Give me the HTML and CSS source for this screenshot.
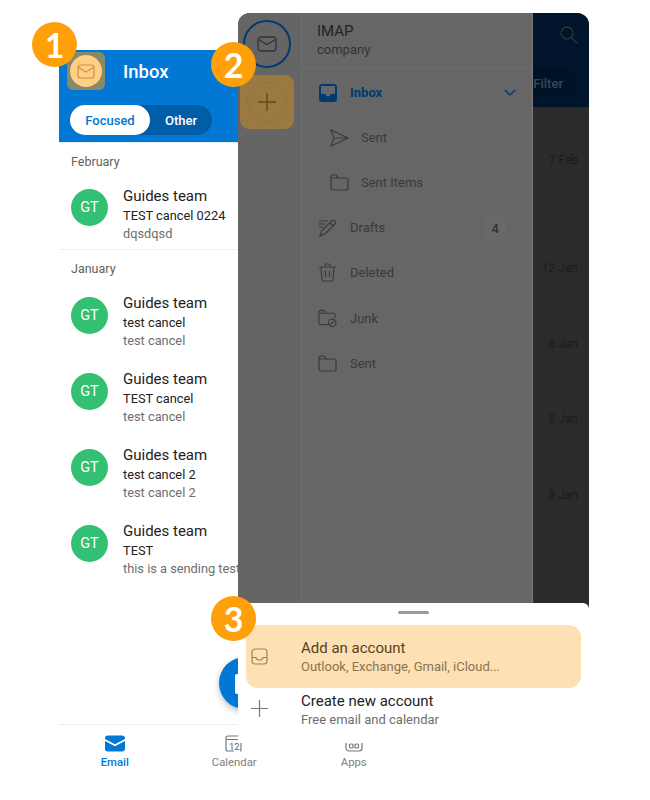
FILE: index.html
```html
<!DOCTYPE html>
<html lang="en">
<head>
  <meta charset="UTF-8" />
  <title>Add an account</title>
  <link rel="stylesheet" href="styles.css">
</head>
<body>
  <div class="stage">

    <!-- phone behind -->
    <div class="phone">
      <header class="inbox-head">
        <div class="head-top">
          <div class="hl-one">
            <div class="acct">
              <svg width="18" height="15" viewBox="0 0 18 15" fill="none" stroke="#c9914a" stroke-width="1.2"><rect x="1" y="1" width="16" height="13" rx="2.5"/><path d="M1.5 3.5 9 8l7.5-4.5"/></svg>
            </div>
          </div>
          <span class="head-title">Inbox</span>
        </div>
        <div class="tabs">
          <span class="tab tab-on">Focused</span>
          <span class="tab">Other</span>
        </div>
      </header>

      <div class="mail-list">
        <div class="month">February</div>
        <div class="mail mail-first">
          <div class="avatar">GT</div>
          <div class="mail-text">
            <div class="from">Guides team</div>
            <div class="subject">TEST cancel 0224</div>
            <div class="preview">dqsdqsd</div>
          </div>
        </div>
        <div class="month month-line">January</div>
        <div class="mail">
          <div class="avatar">GT</div>
          <div class="mail-text">
            <div class="from">Guides team</div>
            <div class="subject">test cancel</div>
            <div class="preview">test cancel</div>
          </div>
        </div>
        <div class="mail">
          <div class="avatar">GT</div>
          <div class="mail-text">
            <div class="from">Guides team</div>
            <div class="subject">TEST cancel</div>
            <div class="preview">test cancel</div>
          </div>
        </div>
        <div class="mail">
          <div class="avatar">GT</div>
          <div class="mail-text">
            <div class="from">Guides team</div>
            <div class="subject">test cancel 2</div>
            <div class="preview">test cancel 2</div>
          </div>
        </div>
        <div class="mail">
          <div class="avatar">GT</div>
          <div class="mail-text">
            <div class="from">Guides team</div>
            <div class="subject">TEST</div>
            <div class="preview">this is a sending test</div>
          </div>
        </div>
      </div>

      <div class="fab"><span class="fab-mark"></span></div>

      <nav class="bottom-nav">
        <div class="nav-item nav-on">
          <svg width="20" height="16" viewBox="0 0 20 16"><path fill="#0078d4" d="M0 3a3 3 0 0 1 3-3h14a3 3 0 0 1 3 3v.5L10 8.800 0 3.500zM0 5.500l10 5.300 10-5.300V13a3 3 0 0 1-3 3H3a3 3 0 0 1-3-3z"/></svg>
          <span>Email</span>
        </div>
        <div class="nav-item">
          <svg width="18" height="17" viewBox="0 0 18 17" fill="none" stroke="#777" stroke-width="1.2"><path d="M1 14V3a2 2 0 0 1 2-2h10a2 2 0 0 1 2 2v1.500H1M1 14a2 2 0 0 0 2 2h6"/><path d="M16 8v7a1 1 0 0 1-1 1"/><text x="4" y="14.500" font-size="9.500" fill="#666" stroke="none" font-family="Roboto">12</text></svg>
          <span>Calendar</span>
        </div>
        <div class="nav-item">
          <svg width="18" height="17" viewBox="0 0 18 17" fill="none" stroke="#777" stroke-width="1.2"><rect x="1" y="1" width="16" height="15" rx="3"/><rect x="4.500" y="9" width="3.500" height="4" rx="1"/><rect x="10" y="9" width="3.500" height="4" rx="1"/></svg>
          <span>Apps</span>
        </div>
      </nav>
    </div>

    <!-- phone in front, drawer open -->
    <div class="window">
      <div class="panes">
        <aside class="rail">
          <div class="rail-mail">
            <svg width="20" height="16" viewBox="0 0 20 16" fill="none" stroke="#333" stroke-width="1.3"><rect x="1" y="1" width="18" height="14" rx="3"/><path d="M1.500 3.500 10 8.500l8.500-5"/></svg>
          </div>
          <div class="hl-two">
            <div class="rail-add">
              <svg width="18" height="18" viewBox="0 0 18 18" stroke="#6b4a12" stroke-width="1.4"><path d="M9 0v18M0 9h18"/></svg>
            </div>
          </div>
        </aside>

        <section class="drawer">
          <div class="drawer-head">
            <div class="acct-name">IMAP</div>
            <div class="acct-org">company</div>
          </div>
          <div class="folder folder-on">
            <svg class="folder-icon" width="18" height="18" viewBox="0 0 18 18"><path fill="#003a70" d="M3 0h12a3 3 0 0 1 3 3v12a3 3 0 0 1-3 3H3a3 3 0 0 1-3-3V3a3 3 0 0 1 3-3z"/><path fill="#666" d="M2 3a1 1 0 0 1 1-1h12a1 1 0 0 1 1 1v7h-4.500a2.500 2.500 0 0 1-5 0H2z"/></svg>
            <span>Inbox</span>
            <svg class="chevron" width="12" height="7" viewBox="0 0 12 7" fill="none" stroke="#003a70" stroke-width="1.4"><path d="m1 1 5 5 5-5"/></svg>
          </div>
          <div class="folder folder-sub">
            <svg class="folder-icon" width="19" height="18" viewBox="0 0 19 18" fill="none" stroke="#3a3a3a" stroke-width="1.2"><path d="M1 1l17 8-17 8 3-8zM4 9h14"/></svg>
            <span>Sent</span>
          </div>
          <div class="folder folder-sub">
            <svg class="folder-icon" width="19" height="17" viewBox="0 0 19 17" fill="none" stroke="#3a3a3a" stroke-width="1.2"><path d="M1 3a2 2 0 0 1 2-2h3l2.500 3H16a2 2 0 0 1 2 2v8a2 2 0 0 1-2 2H3a2 2 0 0 1-2-2zM1 4h7.500"/></svg>
            <span>Sent Items</span>
          </div>
          <div class="folder">
            <svg class="folder-icon" width="19" height="18" viewBox="0 0 19 18" fill="none" stroke="#3a3a3a" stroke-width="1.2"><path d="M1 2h9M1 5h6M1 8h4M2 17l1.500-5L13.500 2a2 2 0 0 1 3.500 3L7 15zM12 4l3 3"/></svg>
            <span>Drafts</span>
            <span class="count">4</span>
          </div>
          <div class="folder">
            <svg class="folder-icon" width="19" height="19" viewBox="0 0 19 19" fill="none" stroke="#3a3a3a" stroke-width="1.2"><path d="M1 4h17M3 4l1 12.500a2 2 0 0 0 2 1.500h7a2 2 0 0 0 2-1.500L16 4M7 4V2.500A1.500 1.500 0 0 1 8.500 1h2A1.500 1.500 0 0 1 12 2.500V4M7.500 8v6M11.500 8v6"/></svg>
            <span>Deleted</span>
          </div>
          <div class="folder">
            <svg class="folder-icon" width="19" height="19" viewBox="0 0 20 19" fill="none" stroke="#3a3a3a" stroke-width="1.2"><path d="M10 16H3a2 2 0 0 1-2-2V3a2 2 0 0 1 2-2h3l2.500 3H16a2 2 0 0 1 2 2v3M1 4h7.500"/><circle cx="15" cy="14" r="4"/><path d="m12.500 16.500 5-5"/></svg>
            <span>Junk</span>
          </div>
          <div class="folder">
            <svg class="folder-icon" width="19" height="17" viewBox="0 0 19 17" fill="none" stroke="#3a3a3a" stroke-width="1.2"><path d="M1 3a2 2 0 0 1 2-2h3l2.500 3H16a2 2 0 0 1 2 2v8a2 2 0 0 1-2 2H3a2 2 0 0 1-2-2zM1 4h7.500"/></svg>
            <span>Sent</span>
          </div>
        </section>

        <section class="dimmed">
          <div class="dim-head">
            <svg class="search" width="18" height="18" viewBox="0 0 18 18" fill="none" stroke="#333" stroke-width="1.3"><circle cx="7" cy="7" r="6"/><path d="m11.500 11.500 6 6"/></svg>
            <div class="filter">Filter</div>
          </div>
          <div class="date date-first">7 Feb</div>
          <div class="date date-month">12 Jan</div>
          <div class="date">8 Jan</div>
          <div class="date">8 Jan</div>
          <div class="date">8 Jan</div>
        </section>
      </div>

      <div class="sheet">
        <div class="handle"></div>
        <div class="sheet-row sheet-on">
          <svg class="sheet-icon" width="17" height="17" viewBox="0 0 17 17" fill="none" stroke="#a08256" stroke-width="1.2"><rect x="1" y="1" width="15" height="15" rx="3"/><path d="M1 9.500h4a3.500 2.500 0 0 0 7 0h4"/></svg>
          <div>
            <div class="sheet-title">Add an account</div>
            <div class="sheet-sub">Outlook, Exchange, Gmail, iCloud...</div>
          </div>
        </div>
        <div class="sheet-row sheet-new">
          <svg class="sheet-icon" width="17" height="17" viewBox="0 0 17 17" stroke="#777" stroke-width="1.2"><path d="M8.500 0v17M0 8.500h17"/></svg>
          <div>
            <div class="sheet-title">Create new account</div>
            <div class="sheet-sub">Free email and calendar</div>
          </div>
        </div>
      </div>
    </div>

    <div class="step step-one">1</div>
    <div class="step step-two">2</div>
    <div class="step step-three">3</div>
  </div>
</body>
</html>
```

FILE: styles.css
```css
* {
  box-sizing: border-box;
}

body {
  margin: 0;
  background: #fff;
  font-family: Roboto, 'Liberation Sans', sans-serif;
  color: #222;
}

.stage {
  position: relative;
  width: 650px;
  height: 800px;
  overflow: hidden;
}

/* back phone */
.phone {
  position: absolute;
  left: 59px;
  top: 50px;
  width: 358px;
  height: 735px;
  display: flex;
  flex-direction: column;
}

.inbox-head {
  height: 92px;
  background: #0078d4;
  padding: 2px 11px 0 8px;
  flex-shrink: 0;
}

.head-top {
  display: flex;
  align-items: center;
}

.hl-one {
  width: 38px;
  height: 38px;
  border-radius: 6px;
  background: #87896b;
  display: flex;
  align-items: center;
  justify-content: center;
}

.acct {
  width: 32px;
  height: 32px;
  border-radius: 50%;
  background: #ffcf84;
  display: flex;
  align-items: center;
  justify-content: center;
}

.head-title {
  margin: 2px 0 0 18px;
  font-size: 18.5px;
  font-weight: 500;
  color: #fff;
}

.tabs {
  display: flex;
  width: 142px;
  height: 30px;
  margin: 15px 0 0 3px;
  border-radius: 15px;
  background: #005ea8;
}

.tab {
  width: 62px;
  font-size: 13px;
  font-weight: 500;
  line-height: 31px;
  text-align: center;
  color: #fff;
}

.tab-on {
  width: 80px;
  border-radius: 15px;
  background: #fff;
  color: #0078d4;
}

.mail-list {
  flex: 1;
  border-top: 1px solid #e3eef8;
}

.month {
  padding: 11px 12px 0;
  font-size: 12.5px;
  line-height: 15px;
  color: #616161;
}

.month-line {
  border-top: 1px solid #f0f0f0;
}

.mail {
  display: flex;
  height: 75.9px;
  padding: 18px 12px 0;
}

.mail-first {
  height: 80px;
}

.avatar {
  width: 37px;
  height: 37px;
  margin-top: 3px;
  border-radius: 50%;
  background: #33c072;
  color: #fff;
  font-size: 14.5px;
  line-height: 37px;
  text-align: center;
  flex-shrink: 0;
}

.mail-first .avatar {
  margin-top: 2px;
}

.mail-text {
  margin-left: 15px;
  white-space: nowrap;
}

.from {
  font-size: 15px;
  line-height: 19px;
  color: #222;
}

.subject {
  margin-top: 1px;
  font-size: 12.8px;
  line-height: 18px;
  color: #222;
}

.preview {
  font-size: 12.8px;
  line-height: 17px;
  color: #6e6e6e;
}

.fab {
  position: absolute;
  left: 160px;
  top: 607px;
  width: 52px;
  height: 52px;
  border-radius: 50%;
  background: #0078d4;
  box-shadow: 0 3px 6px rgba(0,0,0,0.25);
}

.fab-mark {
  display: block;
  width: 8px;
  height: 20px;
  margin: 17px 0 0 16px;
  border-radius: 2px;
  background: #fff;
}

.bottom-nav {
  display: flex;
  height: 61px;
  flex-shrink: 0;
  border-top: 1px solid #eee;
  background: #fff;
}

.nav-item {
  flex: 0 0 119.5px;
  display: flex;
  flex-direction: column;
  align-items: center;
  padding-top: 10px;
  font-size: 11.3px;
  color: #808080;
}

.nav-item svg {
  height: 17px;
  margin-bottom: 4px;
}

.nav-on {
  margin-left: -4px;
  color: #0078d4;
  font-weight: 500;
}

/* front phone */
.window {
  position: absolute;
  left: 238px;
  top: 13px;
  width: 351px;
  height: 730px;
  display: flex;
  flex-direction: column;
  border-radius: 12px 12px 0 0;
  overflow: hidden;
  background: #2b2b2b;
}

.panes {
  display: flex;
  height: 590px;
}

.rail {
  width: 63px;
  padding: 7px 0 0 2px;
  background: #656565;
  flex-shrink: 0;
}

.rail-mail {
  width: 48px;
  height: 48px;
  margin: 0 0 7px 3px;
  border: 2px solid #003a75;
  border-radius: 50%;
  display: flex;
  align-items: center;
  justify-content: center;
}

.hl-two {
  width: 54px;
  height: 54px;
  border-radius: 9px;
  background: #9b7a42;
  display: flex;
  align-items: center;
  justify-content: center;
}

.rail-add {
  width: 40px;
  height: 40px;
  border-radius: 50%;
  border: 1px solid #947340;
  display: flex;
  align-items: center;
  justify-content: center;
}

.drawer {
  width: 232px;
  background: #666;
  border-left: 1px solid #6c6c6c;
  border-right: 1px solid #7a7a7a;
  flex-shrink: 0;
}

.drawer-head {
  height: 56px;
  margin-bottom: 1px;
  padding: 9px 0 0 15px;
  border-bottom: 1px solid #6c6c6c;
}

.acct-name {
  font-size: 15px;
  line-height: 18px;
  color: #222;
}

.acct-org {
  font-size: 13px;
  line-height: 20px;
  color: #333;
}

.folder {
  display: flex;
  align-items: center;
  gap: 13px;
  height: 45.1px;
  padding-left: 16px;
  font-size: 13px;
  color: #3a3a3a;
}

.folder-icon {
  flex-shrink: 0;
}

.folder-sub {
  gap: 12px;
  padding-left: 28px;
}

.folder-on {
  gap: 13px;
  padding-left: 17px;
  color: #003a70;
  font-weight: 700;
}

.chevron {
  margin-left: auto;
  margin-right: 16px;
}

.count {
  margin-left: auto;
  margin-right: 26px;
  width: 22px;
  height: 22px;
  border-radius: 4px;
  background: #696969;
  font-size: 13.5px;
  font-weight: 500;
  line-height: 22px;
  text-align: center;
  color: #333;
}

.dimmed {
  flex: 1;
  overflow: hidden;
  text-align: right;
  font-size: 12px;
  color: #1c1c1c;
}

.dim-head {
  height: 94px;
  padding: 13px 11px 0 0;
  background: #00152b;
}

.search {
  display: block;
  margin-left: auto;
}

.filter {
  width: 44px;
  height: 30px;
  margin: 24px 2px 0 auto;
  padding-right: 14px;
  border-radius: 0 15px 15px 0;
  background: #001226;
  font-size: 13px;
  font-weight: 500;
  line-height: 32px;
  color: #3c4650;
}

.date {
  height: 16px;
  margin-top: 59.7px;
  padding-right: 11px;
  line-height: 16px;
}

.date-first {
  margin-top: 45px;
}

.date-month {
  margin-top: 92px;
}

.sheet {
  flex: 1;
  background: #fff;
  border-radius: 6px 6px 0 0;
  padding: 8px 8px 0;
}

.handle {
  width: 31px;
  height: 3px;
  margin: 0 auto 11px;
  border-radius: 2px;
  background: #999;
}

.sheet-row {
  display: flex;
  align-items: center;
  height: 63px;
  padding-left: 5px;
}

.sheet-new {
  height: 40px;
  padding-top: 3px;
}

.sheet-new .sheet-icon {
  margin-top: -3px;
}

.sheet-on {
  border-radius: 12px;
  background: #fde0b3;
}

.sheet-icon {
  flex-shrink: 0;
  margin-right: 33px;
}

.sheet-title {
  font-size: 15px;
  line-height: 20px;
  color: #222;
}

.sheet-sub {
  font-size: 13px;
  line-height: 17px;
  color: #6e6e6e;
}

.sheet-on .sheet-title {
  color: #5a3f1a;
}

.sheet-on .sheet-sub {
  color: #8c7350;
}

/* numbered steps over everything */
.step {
  position: absolute;
  width: 45px;
  height: 45px;
  border-radius: 50%;
  background: #ff9f0a;
  font-family: Lato, sans-serif;
  font-size: 34px;
  font-weight: 700;
  line-height: 45px;
  text-align: center;
  color: #fff;
}

.step-one {
  left: 32px;
  top: 22px;
}

.step-two {
  left: 211px;
  top: 42px;
}

.step-three {
  left: 211px;
  top: 596px;
}
```
